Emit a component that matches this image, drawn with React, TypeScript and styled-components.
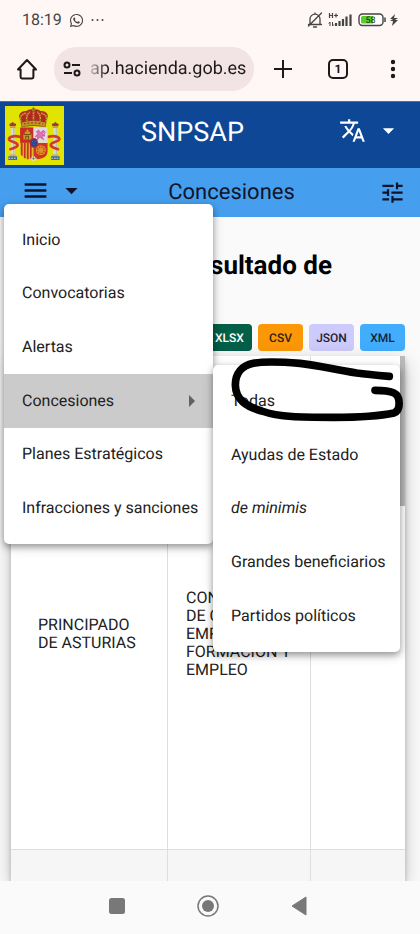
import React from "react";
import styled, { createGlobalStyle, css } from "styled-components";
import { MdArrowDropDown, MdMenu, MdTranslate, MdTune } from "react-icons/md";
import { FaWhatsapp } from "react-icons/fa";

const GlobalStyle = createGlobalStyle`
  *, *::before, *::after { box-sizing: border-box; }
  body { margin: 0; font-family: Roboto, "Liberation Sans", sans-serif; font-size: 16px; color: #212121; text-rendering: geometricPrecision; }
  button, input { text-rendering: inherit; }
  button { font: inherit; color: inherit; border: 0; padding: 0; background: none; cursor: pointer; }
  svg { display: block; flex: none; }
`;

const Page = styled.div`
  display: flex;
  flex-direction: column;
  height: 100vh;
  overflow: hidden;
  background: #fafafa;
`;

const StatusBar = styled.div`
  display: flex;
  justify-content: space-between;
  align-items: center;
  height: 40px;
  padding: 0 22px 0 22px;
  background: #fff7f6;
  color: #444;
`;

const StatusGroup = styled.div<{ $gap: number }>`
  display: flex;
  align-items: center;
  gap: ${(p) => p.$gap}px;
`;

const Clock = styled.time`
  font-size: 16px;
  line-height: 20px;
`;

const BrowserBar = styled.div`
  display: flex;
  align-items: center;
  height: 61px;
  padding: 0 12px 3px;
  background: #fff7f6;
  color: #1d1819;
`;

const ToolButton = styled.button`
  display: grid;
  place-items: center;
  width: 30px;
  height: 40px;
`;

const BrowserActions = styled.div`
  display: flex;
  align-items: center;
  gap: 25px;
  margin-left: 14px;
`;

const AddressBar = styled.label`
  display: flex;
  align-items: center;
  flex: 1;
  min-width: 0;
  height: 44px;
  margin: 0 0 0 12px;
  padding: 0 6px 0 9px;
  gap: 9px;
  border-radius: 22px;
  background: #f2e3e4;
`;

const AddressInput = styled.input`
  flex: 1;
  min-width: 0;
  padding: 0;
  border: 0;
  outline: 0;
  background: none;
  font: 18px/28px Roboto, sans-serif;
  color: #1d1819;
  mask-image: linear-gradient(to right, rgba(0, 0, 0, 0.2), #000 18px);
`;

const Header = styled.header`
  display: grid;
  grid-template-columns: 1fr auto 1fr;
  align-items: center;
  height: 67px;
  padding: 0 18px 0 5px;
  background: #0d4795;
  border-top: 1px solid #4d6ea2;
  color: #fff;
`;

const SiteName = styled.h1`
  margin: 0 22px 7px 0;
  font-size: 27px;
  line-height: 32px;
  font-weight: 400;
`;

const LanguageButton = styled.button`
  display: flex;
  align-items: center;
  justify-self: end;
  gap: 9px;
  margin-bottom: 10px;
`;

const SubHeader = styled.div`
  position: relative;
  z-index: 2;
  display: flex;
  align-items: center;
  justify-content: space-between;
  height: 49px;
  padding: 0 13px 0 21px;
  background: #469fee;
  color: #10142a;
`;

const MenuButton = styled.button`
  display: flex;
  align-items: center;
  gap: 7px;
  margin-bottom: 4px;
`;

const SectionName = styled.h2`
  margin: 0;
  font-size: 22px;
  line-height: 28px;
  font-weight: 400;
`;

const panel = css`
  position: absolute;
  display: grid;
  grid-template-columns: minmax(0, 1fr);
  grid-auto-rows: 1fr;
  margin: 0;
  padding: 9px 0;
  list-style: none;
  background: #fff;
  border-radius: 5px;
  color: #212121;
  box-shadow: 0 3px 6px rgba(0, 0, 0, 0.3), 0 3px 12px rgba(0, 0, 0, 0.18);
`;

const Menu = styled.ul`
  ${panel}
  top: 36px;
  left: 4px;
  width: 209px;
  min-height: 340px;
`;

const SubMenu = styled.ul`
  ${panel}
  top: -9px;
  left: 100%;
  width: 187px;
  min-height: 287px;
`;

const MenuItem = styled.li<{ $active?: boolean }>`
  position: relative;
  display: grid;
  grid-template-columns: minmax(0, 1fr);
  background: ${(p) => (p.$active ? "#cbcbcb" : "transparent")};
`;

const MenuLink = styled.a<{ $italic?: boolean }>`
  display: flex;
  align-items: center;
  justify-content: space-between;
  padding: 0 18px;
  color: inherit;
  font-style: ${(p) => (p.$italic ? "italic" : "normal")};
  line-height: 24px;
  white-space: nowrap;
  text-decoration: none;
`;

const Stroke = styled.svg`
  position: absolute;
  top: -25px;
  left: -13px;
  pointer-events: none;
`;

const Main = styled.main`
  display: flex;
  flex-direction: column;
  flex: 1;
  min-height: 0;
  overflow: hidden;
  padding: 32px 15px 0 11px;
`;

const Title = styled.h3`
  margin: 0;
  padding-right: 73px;
  text-align: right;
  font-size: 26px;
  line-height: 34px;
  font-weight: 700;
  color: #000;
`;

const Exports = styled.div`
  display: flex;
  justify-content: flex-end;
  gap: 6px;
  margin: 41px 0 5px;
`;

const ExportButton = styled.button<{ $bg: string; $fg: string }>`
  width: 45px;
  height: 27px;
  border-radius: 4px;
  background: ${(p) => p.$bg};
  color: ${(p) => p.$fg};
  font-size: 12px;
  font-weight: 500;
`;

const Card = styled.div`
  position: relative;
  display: flex;
  flex: 1;
  min-height: 0;
  background: #fff;
  box-shadow: 0 4px 5px rgba(0, 0, 0, 0.2), 0 6px 18px rgba(0, 0, 0, 0.22);
`;

const TableClip = styled.div`
  flex: 1;
  min-width: 0;
  overflow: hidden;
`;

const Scrollbar = styled.div`
  position: absolute;
  top: 0;
  right: 0;
  width: 5px;
  height: 150px;
  background: #b9b9b9;
`;

const Table = styled.table`
  width: 100%;
  table-layout: fixed;
  border-collapse: separate;
  border-spacing: 0;
`;

const Col = styled.col<{ $w?: number }>`
  width: ${(p) => (p.$w ? `${p.$w}px` : "auto")};
`;

const Row = styled.tr<{ $h: number; $shade?: boolean }>`
  height: ${(p) => p.$h}px;
  background: ${(p) => (p.$shade ? "#f6f6f6" : "#fff")};
`;

const cell = css`
  padding: 0 16px 0 18px;
  border-bottom: 1px solid #dedede;
  border-right: 1px solid #dedede;
  text-align: left;
  vertical-align: middle;
  line-height: 18px;
  font-weight: 400;
  &:first-child { padding-left: 27px; }
  &:last-child { border-right: 0; }
`;
const Th = styled.th`${cell}`;
const Td = styled.td`${cell}`;

const SystemNav = styled.nav`
  position: relative;
  display: flex;
  justify-content: center;
  align-items: center;
  gap: 61px;
  height: 53px;
  padding: 0 4px 3px 0;
  background: #fafafa;
`;

const NavButton = styled.button`
  display: grid;
  place-items: center;
  width: 30px;
  height: 30px;
`;

const Battery = styled.div`
  display: flex;
  align-items: center;
  gap: 4px;
`;

const Pillar = ({ x }: { x: number }) => (
  <g>
    <rect x={x - 10} y="52" width="20" height="8" rx="3" fill="#a8392d" />
    <path d={`M${x - 6} 54l6-7 6 7z`} fill="#a8392d" />
    <rect x={x - 8} y="60" width="16" height="6" fill="#bda24c" />
    <rect x={x - 6} y="66" width="12" height="80" fill="#d9d9d4" />
    <path d={`M${x + 3} 66v80`} stroke="#a7a7a4" strokeWidth="2" />
    <rect x={x - 9} y="144" width="18" height="7" fill="#c5b265" />
    <rect x={x - 13} y="150" width="26" height="11" fill="#3a67a8" />
    <path d={`M${x - 12} 156h24`} stroke="#dedede" strokeWidth="3" strokeDasharray="5 3" />
  </g>
);

const CoatOfArms = () => (
  <svg width="59" height="59" viewBox="0 0 176 176" role="img" aria-label="Escudo de España">
    <rect width="176" height="176" fill="#e1e400" />
    <Pillar x={23} />
    <Pillar x={150} />
    <g fill="none" stroke="#d33a27" strokeWidth="8" strokeLinecap="round">
      <path d="M44 92C32 88 14 90 12 98s18 8 24 15-6 12-20 16" />
      <path d="M130 92c12-4 30-2 32 6s-18 8-24 15 6 12 20 16" />
    </g>
    <path d="M43 35c-4-12 8-22 21-20 6-8 36-8 42 0 13-2 25 8 21 20l-8 24H51z" fill="#b02a21" />
    <path d="M50 52C38 33 53 21 64 22M120 52c12-19-3-31-14-30M68 52c-6-14-4-28 6-34M102 52c6-14 4-28-6-34M85 52V18" fill="none" stroke="#c8a62b" strokeWidth="5" strokeDasharray="5 2" />
    <path d="M48 49q37-12 74 0l-2 13q-35-8-70 0z" fill="#c49a26" stroke="#75431e" strokeWidth="2" />
    <path d="M56 54q29-7 58 0" fill="none" stroke="#c82b25" strokeWidth="4" strokeDasharray="6 5" />
    <circle cx="85" cy="12" r="5" fill="#a87b20" />
    <path d="M85 3v10M81 7h8" stroke="#875a20" strokeWidth="2" />
    <path d="M45 64h40v46H45z" fill="#c92c22" />
    <path d="M85 64h42v46H85z" fill="#e4d8dc" />
    <path d="M45 110h40v49c-22 0-40-4-40-24z" fill="#deb628" />
    <path d="M85 110h42v25c0 20-20 24-42 24z" fill="#cf3520" />
    <path d="M50 110v38M59 110v46M68 110v49M77 110v49" stroke="#c9301f" strokeWidth="5" />
    <path d="M55 100V84h4v-7h5v-7h6v7h5v7h4v16z" fill="#c89a25" />
    <path d="M62 100V90h8v10M57 85h20" fill="none" stroke="#785018" strokeWidth="3" />
    <path d="M94 76l7-4 5 8 8-8 5 5-7 5 6 7-9 1 7 11-12-8-9 9 3-13-8 3 8-9zM116 92l4-16" fill="#df72ae" stroke="#bf4f98" strokeWidth="2" />
    <g fill="none" stroke="#e1952d" strokeWidth="3">
      <circle cx="107" cy="132" r="13" />
      <circle cx="107" cy="132" r="6" />
      <path d="M107 118v28M93 132h28M97 122l20 20M117 122l-20 20" />
    </g>
    <path d="M74 159l11-11 11 11-11 6z" fill="#e4e0ca" />
    <path d="M85 150v11M79 157h12" stroke="#4d7a44" strokeWidth="2" />
    <ellipse cx="86" cy="110" rx="11" ry="13" fill="#2c4594" stroke="#b92e32" strokeWidth="3" />
    <path d="M82 106h1M89 106h1M86 114h1" stroke="#d8bd43" strokeWidth="3" />
  </svg>
);

const HomeIcon = () => (
  <svg width="22" height="22" viewBox="0 0 22 22" fill="none" stroke="currentColor" strokeWidth="2" strokeLinejoin="round" strokeLinecap="round">
    <path d="M2 11.5L11 2l9 9.5h-2.6V19a1.4 1.4 0 0 1-1.4 1.4H6A1.4 1.4 0 0 1 4.600 19v-7.500z" />
  </svg>
);

const SiteIcon = () => (
  <svg width="18" height="16" viewBox="0 0 18 16" fill="none" stroke="currentColor" strokeWidth="2">
    <circle cx="4" cy="4" r="2.500" />
    <path d="M9 4h8M1 12h8" />
    <circle cx="14" cy="12" r="2.500" />
  </svg>
);

const BellOff = () => (
  <svg width="16" height="16" viewBox="0 0 16 16" fill="none" stroke="currentColor" strokeWidth="1.300" strokeLinecap="round">
    <path d="M3 12V7a5 4.800 0 0 1 10 0v5M1.500 12.500h13M6.500 15h3M14.500 1L1.500 14M8 2V1" />
  </svg>
);

const Signal = () => (
  <svg width="25" height="16" viewBox="0 0 25 16" fill="none" stroke="currentColor">
    <path d="M1.500 1v5M4.500 1v5M1.500 3.500h3M6 3.500h4M8 1.500v4" strokeWidth="1.200" />
    <path d="M2 10v4M.8 11.500L2 10M4.500 10v4M5.700 12.500L4.500 14" strokeWidth="1" />
    <path d="M8 14v-3M11.500 14v-5M15 14V7M18.500 14V4.500M22.500 14V2.500" strokeWidth="2.200" />
  </svg>
);

const BatteryIcon = () => (
  <svg width="28" height="14" viewBox="0 0 28 14">
    <rect x="1" y="1" width="24" height="11.500" rx="3.500" fill="#fff" stroke="#444" strokeWidth="1.400" />
    <path d="M4.500 3H15v7.500H4.500A1.500 1.500 0 0 1 3 9V4.500A1.500 1.500 0 0 1 4.500 3z" fill="#5dcc2b" />
    <path d="M27 4.500v4.500" stroke="#444" strokeWidth="1.500" />
    <text x="12.500" y="10" fontSize="9" fontFamily="Roboto, sans-serif" textAnchor="middle" fill="#222">58</text>
  </svg>
);

type Entry = { label: string; italic?: boolean };

const before = ["Inicio", "Convocatorias", "Alertas"];
const after = ["Planes Estratégicos", "Infracciones y sanciones"];
const grants: Entry[] = [
  { label: "Todas" },
  { label: "Ayudas de Estado" },
  { label: "de minimis", italic: true },
  { label: "Grandes beneficiarios" },
  { label: "Partidos políticos" },
];
const formats = [
  { name: "XLSX", bg: "#045f48", fg: "#fff" },
  { name: "CSV", bg: "#fc9807", fg: "#2b2117" },
  { name: "JSON", bg: "#cdcafc", fg: "#24232d" },
  { name: "XML", bg: "#42adfd", fg: "#12263a" },
];

const Entries = ({ items }: { items: Entry[] }) => (
  <>
    {items.map((e) => (
      <MenuItem key={e.label}>
        <MenuLink href="#" $italic={e.italic}>{e.label}</MenuLink>
      </MenuItem>
    ))}
  </>
);

export default function App() {
  return (
    <Page>
      <GlobalStyle />
      <StatusBar>
        <StatusGroup $gap={7}>
          <Clock>18:19</Clock>
          <FaWhatsapp size={15} />
          <svg width="13" height="4" viewBox="0 0 13 4" fill="currentColor">
            <circle cx="1.500" cy="2" r="1" /><circle cx="6.500" cy="2" r="1" /><circle cx="11.500" cy="2" r="1" />
          </svg>
        </StatusGroup>
        <StatusGroup $gap={5}>
          <BellOff />
          <Signal />
          <Battery>
            <BatteryIcon />
            <svg width="8" height="12" viewBox="0 0 8 12" fill="currentColor"><path d="M5 0L0 5h3L0 7h3l-1 5 6-6H5l3-2H4z" /></svg>
          </Battery>
        </StatusGroup>
      </StatusBar>
      <BrowserBar>
        <ToolButton aria-label="Página principal"><HomeIcon /></ToolButton>
        <AddressBar>
          <SiteIcon />
          <AddressInput aria-label="Dirección" defaultValue="ap.hacienda.gob.es" />
        </AddressBar>
        <BrowserActions>
          <ToolButton aria-label="Pestaña nueva">
            <svg width="18" height="18" viewBox="0 0 18 18" stroke="currentColor" strokeWidth="2"><path d="M9 0v18M0 9h18" /></svg>
          </ToolButton>
          <ToolButton aria-label="Pestañas abiertas">
            <svg width="22" height="22" viewBox="0 0 22 22">
              <rect x="2" y="2" width="18" height="18" rx="4" fill="none" stroke="currentColor" strokeWidth="2" />
              <text x="11" y="15" textAnchor="middle" fontSize="12" fontWeight="700" fontFamily="Roboto, sans-serif" fill="currentColor">1</text>
            </svg>
          </ToolButton>
          <ToolButton aria-label="Más opciones">
            <svg width="6" height="20" viewBox="0 0 6 20" fill="currentColor"><circle cx="3" cy="3" r="2.200" /><circle cx="3" cy="10" r="2.200" /><circle cx="3" cy="17" r="2.200" /></svg>
          </ToolButton>
        </BrowserActions>
      </BrowserBar>
      <Header>
        <CoatOfArms />
        <SiteName>SNPSAP</SiteName>
        <LanguageButton aria-label="Idioma">
          <MdTranslate size={27} />
          <MdArrowDropDown size={27} />
        </LanguageButton>
      </Header>
      <SubHeader>
        <MenuButton aria-label="Menú" aria-expanded="true">
          <MdMenu size={29} />
          <MdArrowDropDown size={29} />
        </MenuButton>
        <SectionName>Concesiones</SectionName>
        <ToolButton aria-label="Filtros"><MdTune size={27} /></ToolButton>
        <Menu>
          <Entries items={before.map((label) => ({ label }))} />
          <MenuItem $active>
            <MenuLink href="#" aria-haspopup="true">
              Concesiones
              <svg width="6" height="12" viewBox="0 0 6 12" fill="#616161"><path d="M0 0l6 6-6 6z" /></svg>
            </MenuLink>
            <SubMenu>
              <Entries items={grants} />
              <Stroke width="220" height="100" viewBox="0 0 660 300" fill="none" stroke="#000" strokeWidth="23" strokeLinecap="round" strokeLinejoin="round" aria-hidden="true">
                <path d="M568 109C545 107 500 103 470 99C400 88 350 75 300 70C250 66 185 65 160 70C125 77 106 100 106 135C107 180 140 200 185 213C240 232 300 232 400 232C480 232 540 228 582 219C599 212 598 195 597 185C596 160 580 151 525 151" />
              </Stroke>
            </SubMenu>
          </MenuItem>
          <Entries items={after.map((label) => ({ label }))} />
        </Menu>
      </SubHeader>
      <Main>
        <Title>Resultado de</Title>
        <Exports>
          {formats.map((f) => (
            <ExportButton key={f.name} $bg={f.bg} $fg={f.fg}>{f.name}</ExportButton>
          ))}
        </Exports>
        <Card>
          <TableClip>
            <Table>
              <colgroup><Col $w={157} /><Col $w={143} /><Col /></colgroup>
              <thead>
                <Row $h={62}><Th /><Th /><Th /></Row>
              </thead>
              <tbody>
                <Row $h={432}>
                  <Td>PRINCIPADO DE ASTURIAS</Td>
                  <Td>CONSEJERÍA DE CIENCIA, EMPRESAS, FORMACIÓN Y EMPLEO</Td>
                  <Td />
                </Row>
                <Row $h={432} $shade><Td /><Td /><Td /></Row>
              </tbody>
            </Table>
          </TableClip>
          <Scrollbar />
        </Card>
      </Main>
      <SystemNav>
        <NavButton aria-label="Recientes">
          <svg width="16" height="16" viewBox="0 0 16 16"><rect width="16" height="16" rx="2.500" fill="#787878" /></svg>
        </NavButton>
        <NavButton aria-label="Inicio">
          <svg width="22" height="22" viewBox="0 0 22 22"><circle cx="11" cy="11" r="10" fill="none" stroke="#787878" strokeWidth="1.500" /><circle cx="11" cy="11" r="6" fill="#787878" /></svg>
        </NavButton>
        <NavButton aria-label="Atrás">
          <svg width="16" height="20" viewBox="0 0 16 20"><path d="M1 10L15 1v18z" fill="#787878" stroke="#787878" strokeLinejoin="round" /></svg>
        </NavButton>
      </SystemNav>
    </Page>
  );
}
